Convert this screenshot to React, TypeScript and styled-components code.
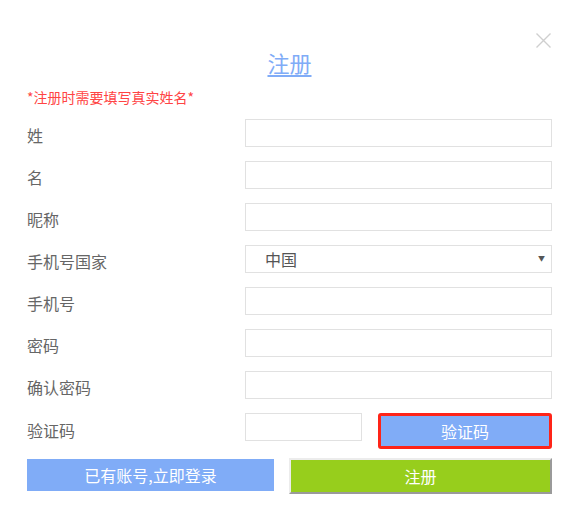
import React from 'react';
import styled, { createGlobalStyle } from 'styled-components';

const GlobalStyle = createGlobalStyle`
  html, body {
    margin: 0;
    padding: 0;
    background: #fff;
  }
  body {
    font-family: "Microsoft YaHei", "Noto Sans CJK SC", "Noto Sans", sans-serif;
  }
  * {
    box-sizing: border-box;
  }
`;

const fields = ['姓', '名', '昵称', '手机号国家', '手机号', '密码', '确认密码'];

function App() {
  return (
    <>
      <GlobalStyle />
      <Dialog>
        <Close aria-label="close">
          <svg width="15" height="15" viewBox="0 0 15 15">
            <path d="M0.5 0.5 L14.5 14.5 M14.5 0.5 L0.5 14.5" stroke="#cfcfcf" strokeWidth="1.4" fill="none" />
          </svg>
        </Close>
        <Title>注册</Title>
        <Notice>*注册时需要填写真实姓名*</Notice>
        <Form>
          {fields.map((label) => (
            <React.Fragment key={label}>
              <Label>{label}</Label>
              {label === '手机号国家' ? (
                <SelectWrap>
                  <Select defaultValue="cn">
                    <option value="cn">中国</option>
                  </Select>
                  <Caret>▼</Caret>
                </SelectWrap>
              ) : (
                <Input type={label.includes('密码') ? 'password' : 'text'} />
              )}
            </React.Fragment>
          ))}
          <Label $raise>验证码</Label>
          <CodeRow>
            <CodeInput />
            <CodeButton>验证码</CodeButton>
          </CodeRow>
        </Form>
        <Actions>
          <LoginButton>已有账号,立即登录</LoginButton>
          <SubmitButton>注册</SubmitButton>
        </Actions>
      </Dialog>
    </>
  );
}

export default App;

const Dialog = styled.div`
  position: relative;
  width: 578px;
  height: 522px;
  padding: 47px 26px 0 27px;
  background: #fff;
`;

const Close = styled.button`
  position: absolute;
  top: 33px;
  right: 27px;
  width: 15px;
  height: 15px;
  padding: 0;
  border: none;
  background: none;
  display: flex;
  cursor: pointer;
`;

const Title = styled.h2`
  margin: 0;
  text-align: center;
  font-size: 22px;
  line-height: 30px;
  font-weight: normal;
  color: #80acf7;
  text-decoration: underline;
  text-underline-offset: 3px;
`;

const Notice = styled.p`
  margin: 10px 0 0;
  font-size: 14px;
  line-height: 20px;
  color: #ff4444;
`;

const Form = styled.div`
  margin-top: 12px;
  display: grid;
  grid-template-columns: 218px 307px;
  row-gap: 14px;
  align-items: center;
`;

const Label = styled.span<{ $raise?: boolean }>`
  height: 28px;
  font-size: 16px;
  line-height: 24px;
  padding-top: ${(p) => (p.$raise ? '1px' : '4px')};
  color: #666;
`;

const Input = styled.input`
  width: 307px;
  height: 28px;
  margin: 0;
  border: 1px solid #e1e1e1;
  outline: none;
  padding: 0 10px;
  font-size: 16px;
  background: #fff;
`;

const SelectWrap = styled.div`
  position: relative;
  width: 307px;
  height: 28px;
`;

const Select = styled.select`
  appearance: none;
  width: 100%;
  height: 28px;
  margin: 0;
  border: 1px solid #e1e1e1;
  border-radius: 0;
  outline: none;
  padding: 0 0 0 19px;
  font-family: inherit;
  font-size: 16px;
  color: #555;
  background: #fff;
`;

const Caret = styled.span`
  position: absolute;
  right: 7px;
  top: 10px;
  font-size: 7px;
  line-height: 7px;
  color: #555;
  pointer-events: none;
`;

const CodeRow = styled.div`
  display: flex;
  align-items: flex-start;
  gap: 16px;
  height: 36px;
`;

const CodeInput = styled(Input)`
  width: 117px;
`;

const CodeButton = styled.button`
  flex: 1;
  height: 36px;
  margin: 0;
  border: 3px solid #ff2418;
  border-radius: 3px;
  background: #80acf7;
  color: #fff;
  font-family: inherit;
  font-size: 16px;
  cursor: pointer;
`;

const Actions = styled.div`
  margin-top: 9px;
  display: flex;
  align-items: flex-start;
  gap: 15px;
`;

const LoginButton = styled.button`
  width: 247px;
  height: 32px;
  margin: 1px 0 0;
  border: none;
  background: #80acf7;
  color: #fff;
  font-family: inherit;
  font-size: 16px;
  cursor: pointer;
`;

const SubmitButton = styled.button`
  width: 263px;
  height: 36px;
  margin: 0;
  border-width: 2px;
  border-style: solid;
  border-color: #ececec #9a9a9a #9a9a9a #ececec;
  background: #97ce1c;
  color: #fff;
  font-family: inherit;
  font-size: 16px;
  cursor: pointer;
`;
